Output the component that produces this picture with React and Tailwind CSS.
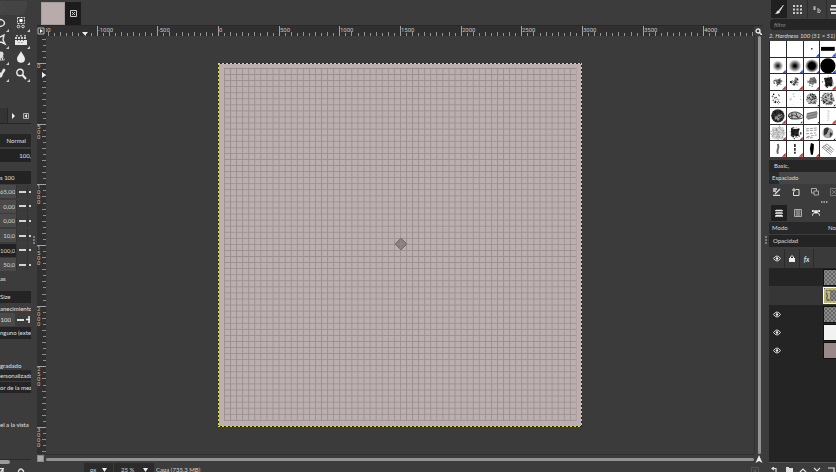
import React from "react";

const PX_PER_UNIT = 364 / 3000;

function rulerTicks(from, to) {
  const out = [];
  for (let u = from; u <= to; u += 50) out.push(u);
  return out;
}

function HorizontalRuler() {
  const zero = 172;
  return (
    <svg className="h-full w-full" fontFamily="Roboto, sans-serif" fontSize="6" fill="#c4c4c4">
      {rulerTicks(-1400, 4900).map((u) => {
        const x = Math.round(zero + u * PX_PER_UNIT);
        const major = u % 500 === 0;
        const h = major ? 10 : u % 100 === 0 ? 4 : 3;
        return <rect key={u} x={x} y={10 - h} width="1" height={h} fill={major ? "#a2a2a2" : "#949494"} />;
      })}
      {[-1000, -500, 0, 500, 1000, 1500, 2000, 2500, 3000, 3500, 4000].map((u) => (
        <text key={u} x={Math.round(zero + u * PX_PER_UNIT) + 1} y="6">{u}</text>
      ))}
      <text x="-2" y="6">00</text>
      <path d="M36 6h6l-3 3.500z" fill="#eee" />
    </svg>
  );
}

function VerticalRuler() {
  const zero = 27;
  return (
    <svg className="h-full w-full" fontFamily="Roboto, sans-serif" fontSize="6" fill="#c4bfa8">
      {rulerTicks(-200, 3300).map((u) => {
        const y = Math.round(zero + u * PX_PER_UNIT);
        const major = u % 500 === 0;
        const w = major ? 9 : u % 100 === 0 ? 4 : 3;
        return <rect key={u} x={9 - w} y={y} width={w} height="1" fill={major ? "#a2a2a2" : "#8c8c8c"} />;
      })}
      {[0, 500, 1000, 1500, 2000, 2500, 3000].map((u) =>
        String(u).split("").map((d, i) => (
          <text key={u + "-" + i} x="0" y={Math.round(zero + u * PX_PER_UNIT) + 5 + i * 5}>{d}</text>
        ))
      )}
      <path d="M5 36v6l4-3z" fill="#eee" />
    </svg>
  );
}

function Artwork() {
  return (
    <svg className="h-[364px] w-[364px] shrink-0" viewBox="0 0 364 364" role="img" aria-label="Canvas">
      <defs>
        <pattern id="cells" x="6" y="5" width="6.067" height="6.067" patternUnits="userSpaceOnUse">
          <path d="M0 .5H6.067M.5 0V6.067" stroke="#9b8f8f" strokeWidth="0.9" />
        </pattern>
      </defs>
      <rect width="364" height="364" fill="#bbafaf" />
      <rect x="6" y="5" width="352.500" height="353" fill="url(#cells)" />
      <rect x=".5" y=".5" width="363" height="363" fill="none" stroke="#25251c" />
      <path d="M0 .5H364M.5 0V364M0 363.500H364M363.500 0V364" fill="none" stroke="#e0da4a" strokeDasharray="2 2" />
      <path d="M183 175l6 6-6 6-6-6z" fill="#877d7d" stroke="#777070" />
      <path d="M183 177v8M179 181h8" stroke="#9b9090" strokeWidth=".7" />
    </svg>
  );
}

const TOOLS = [
  ["Ellipse select", <ellipse key="a" cx="2" cy="6" rx="5.500" ry="3.500" fill="none" stroke="#e5e5e5" strokeWidth="1.500" />],
  ["Foreground select", <g key="a" fill="none" stroke="#ddd"><rect x="2.500" y=".5" width="7" height="6" strokeDasharray="2 1" /><circle cx="6" cy="3.500" r="1.800" fill="#fff" stroke="none" /><circle cx="3.500" cy="9.500" r="1.300" /><circle cx="8" cy="9.500" r="1.300" /></g>],
  ["Cage transform", <path key="a" d="M-2 4l5-1 4-2-1 5 2 4-4-2-6 1" fill="none" stroke="#e5e5e5" strokeWidth="1.400" />],
  ["Gradient", <g key="a" fill="#e8e8e8"><path d="M0 6h12v5H0z" /><path d="M1 1h2v1.500H1zM5 1h2v1.500H5zM9 1h2v1.500H9z" opacity=".7" /><path d="M0 3h2v2H0zM3 3h2v2H3zM6 3h2v2H6zM9 3h2v2H9z" opacity=".85" /><path d="M2 6h1v1H2zM5 6h1v1H5zM8 6h1v1H8zM3.500 8h1v1h-1zM6.500 8h1v1h-1z" fill="#666" /></g>],
  ["Clone", <g key="a" fill="#ddd"><circle cx="4" cy="3" r="2.500" /><path d="M0 5h6l2 4-4 1-2-2-3 2z" /><path d="M4 7l1 3M6 6l1 3" stroke="#555" /></g>],
  ["Blur", <path key="a" d="M6 0C7 3 10 5 10 8a4 3.700 0 0 1-8 0C2 5 5 3 6 0z" fill="#ececec" />],
  ["Colour picker", <path key="a" d="M-2 10l4-3-1-2 2-1 1 1 2-4c2-1 3 1 2 2L6 6l-1 3-3 1z" fill="#e5e5e5" />],
  ["Zoom", <g key="a" fill="none" stroke="#ececec"><circle cx="5" cy="4.500" r="3.200" strokeWidth="1.400" /><path d="M7.500 7L11 11" strokeWidth="2" /></g>],
];

const SPINS = ["65,00", "0,00", "0,00", "10,0", "100,0", "50,0"];

function Spin({ value, dark, index }) {
  return (
    <div className="flex h-[13px] overflow-hidden bg-[#333]">
      <input aria-label={"Value " + index} defaultValue={value} className={"w-4 min-w-0 pr-px text-right text-[6px] leading-[13px] text-[#d8d8d8] " + (dark ? "bg-[#222]" : "bg-[#4a4a4a]")} />
      <button aria-label="Decrease" className="ml-px flex w-2.5 items-center justify-center bg-[#3b3b3b]"><i className="block h-0.5 w-[7px] bg-[#d4d4d4]" /></button>
      <button aria-label="Increase" className="ml-px flex flex-1 items-center justify-center bg-[#3b3b3b]"><i className="block h-0.5 w-0.5 bg-[#d4d4d4]" /></button>
    </div>
  );
}

function ToolDock() {
  return (
    <aside className="flex w-[31px] shrink-0 flex-col overflow-hidden whitespace-nowrap text-[6px] leading-3 text-[#e0e0e0]">
      <svg className="h-[15px] w-full shrink-0"><path d="M0 1h27v5q-1 9-8 9H0z" fill="#444" /><path d="M0 3q4 3 2 8l-2 2" fill="none" stroke="#4d4d4d" /></svg>
      <div className="grid h-[67px] shrink-0 grid-cols-[10px_21px] grid-rows-4">
        {TOOLS.map(([name, art], i) => (
          <button key={name} aria-label={name} className="flex items-center justify-between">
            <svg className={i % 2 ? "ml-[5px] h-3 w-3" : "-ml-1 h-3 w-3"} viewBox={i % 2 ? "0 0 12 12" : "-1 0 12 12"}>{art}</svg>
            <svg className="-ml-1 h-3 w-1 shrink-0 self-end" viewBox="0 0 4 12"><path d="M3 9v3H0z" fill="#ccc" /></svg>
          </button>
        ))}
      </div>
      <div className="mt-[26px] flex h-4 shrink-0 items-center border-b border-[#252525]">
        <span className="h-full w-2 border-r border-[#282828] bg-[#343434]" />
        <button aria-label="Next tab" className="ml-1"><svg className="h-1.5 w-[3px]" viewBox="0 0 3 6"><path d="M0 0l3 3-3 3z" fill="#eee" /></svg></button>
        <button aria-label="Configure tab" className="ml-2"><svg className="h-1.5 w-1.5" viewBox="0 0 6 6"><path d="M.5.5h5v5h-5z" fill="#444" stroke="#aaa" /><path d="M1.500 3l2.500-2v4z" fill="#eee" /></svg></button>
      </div>
      <button className="mt-2.5 h-[13px] shrink-0 bg-[#262626] pr-[5px] text-right">Normal</button>
      <input aria-label="Opacity" defaultValue="100," className="mt-0.5 h-[13px] w-full shrink-0 bg-[#232323] text-right" />
      <input aria-label="Brush" defaultValue="s 100" className="mt-[9px] h-[13px] w-full shrink-0 bg-[#232323]" />
      <div className="mt-px grid h-[88px] shrink-0 grid-rows-6">
        {SPINS.map((v, i) => <Spin key={i} index={i} value={v} dark={i === 4} />)}
      </div>
      <p className="h-[11px] shrink-0 leading-[11px]">as</p>
      <button className="mt-[7px] h-3 shrink-0 bg-[#242424] text-left">Size</button>
      <p className="mt-px h-[9px] shrink-0 leading-[9px]">anecimiento</p>
      <div className="flex h-[13px] shrink-0">
        <input aria-label="Smoothing" defaultValue="100" className="w-[15px] min-w-0 bg-[#4a4a4a] pr-1 text-right" />
        <button aria-label="Decrease" className="flex w-2.5 items-center justify-center"><i className="block h-0.5 w-[7px] bg-[#ddd]" /></button>
        <button aria-label="Increase" className="flex flex-1 items-center"><svg className="h-[7px] w-[5px]"><path d="M1 3.500h6M4 0v7" stroke="#eee" strokeWidth="1.500" /></svg></button>
      </div>
      <button className="mt-px h-3 shrink-0 bg-[#242424] text-left">nguno (exter</button>
      <p className="mt-[22px] h-[9px] shrink-0 leading-[9px]">gradado</p>
      <button className="h-[11px] shrink-0 bg-[#272727] text-left leading-[11px]">ersonalizado</button>
      <button className="mt-px h-[11px] shrink-0 bg-[#242424] text-left leading-[11px]">or de la mezc</button>
      <p className="mt-[26px] shrink-0">el a la vista</p>
      <div className="mt-auto h-[13px] shrink-0 border-t border-[#2b2b2b]">
        <i className="block h-1 w-2.5 rounded-r-full bg-[#9a9a9a]" />
        <svg className="mt-1 h-[5px] w-full"><path d="M0 .5h4M3 1v4M0 5l3-4M18.500 5V3q2-4 5 0v2" fill="none" stroke="#ddd" strokeWidth="1.300" /></svg>
      </div>
    </aside>
  );
}

function Splitter() {
  return (
    <div className="flex h-full w-1.5 shrink-0 items-center justify-center pt-2">
      <svg className="h-2 w-0.5" viewBox="0 0 2 8"><path d="M0 1h2M0 4h2M0 7h2" stroke="#bbb" /></svg>
    </div>
  );
}

function ImageWindow() {
  return (
    <main className="flex min-w-0 flex-1 flex-col">
      <div className="flex h-[26px] shrink-0 items-stretch border-b border-[#292929] pl-1 pt-0.5">
        <button aria-label="Image tab" className="h-[23px] w-6 border border-[#a49a9a] bg-[#b7abab]" />
        <button aria-label="Close image" className="flex h-[23px] w-4 items-center justify-center bg-[#1c1c1c]">
          <svg className="h-[7px] w-[7px]" viewBox="0 0 7 7"><path d="M.5.5h6v6h-6zM2 2l3 3M5 2L2 5" fill="none" stroke="#ccc" /></svg>
        </button>
      </div>
      <div className="flex h-2.5 shrink-0 bg-[#303030]">
        <button aria-label="Image menu" className="flex w-[9px] shrink-0 items-center"><svg className="h-2 w-2" viewBox="0 0 8 8"><path d="M1 1h6v6H1z" fill="#333" stroke="#b5b5b5" /><path d="M3 2l3 2-3 2z" fill="#eee" /></svg></button>
        <div className="min-w-0 flex-1"><HorizontalRuler /></div>
        <button aria-label="Zoom with window" className="flex w-[9px] shrink-0 items-center justify-center bg-[#3b3b3b]"><svg className="h-[7px] w-[7px]" viewBox="0 0 7 7"><circle cx="3" cy="3" r="2" fill="none" stroke="#eee" strokeWidth="1.300" /><path d="M4 4l3 3" stroke="#eee" strokeWidth="1.500" /></svg></button>
      </div>
      <div className="flex min-h-0 flex-1">
        <div className="w-[9px] shrink-0 bg-[#303030]"><VerticalRuler /></div>
        <div className="flex min-w-0 flex-1 items-center justify-center overflow-hidden bg-[#3b3b3b]"><Artwork /></div>
        <div className="flex w-[9px] shrink-0 justify-center border-l border-[#303030]"><i className="block w-[3px] rounded-full bg-[#929292]" /></div>
      </div>
      <div className="flex h-[9px] shrink-0 items-center">
        <button aria-label="Quick mask" className="h-[7px] w-[7px] border border-[#888] bg-[#aaa]" />
        <div className="ml-0.5 flex h-full flex-1 items-center border-t border-[#303030]"><i className="block h-[3px] w-full rounded-full bg-[#929292]" /></div>
        <button aria-label="Navigate" className="flex w-[9px] justify-center"><svg className="h-2 w-2" viewBox="0 0 8 8"><path d="M4 0l3.500 8L4 6 .5 8z" fill="#eee" /></svg></button>
      </div>
      <footer className="flex h-[9px] shrink-0 items-start text-[6px] leading-[10px] text-[#d0d0d0]">
        <button className="ml-[47px] flex h-[9px] w-[29px] items-center justify-between bg-[#2b2b2b] px-1.5 pt-1">px<svg className="h-1 w-[5px]"><path d="M0 0h5L2.500 4z" fill="#eee" /></svg></button>
        <button className="ml-px flex h-[9px] w-10 items-center justify-between bg-[#2b2b2b] pl-[7px] pr-1.5 pt-1">25 %<svg className="h-1 w-[5px]"><path d="M0 0h5L2.500 4z" fill="#eee" /></svg></button>
        <span className="ml-0.5 mt-0.5 h-[7px] flex-1">Capa (735,3 MB)</span>
        <button aria-label="Cancel" className="mr-1 mt-1"><svg className="h-[5px] w-2"><path d="M.5 5V.5h7V5M2 2l3 3M6 2L3 5" fill="none" stroke="#555" /></svg></button>
      </footer>
    </main>
  );
}

function scatter(seed, n, spread, size) {
  let s = seed * 7919 + 13;
  const rnd = () => {
    s = (s * 16807) % 2147483647;
    return s / 2147483647;
  };
  return Array.from({ length: n }, () => {
    const a = rnd() * Math.PI * 2;
    const r = Math.pow(rnd(), 0.6) * spread;
    return { x: 8 + Math.cos(a) * r, y: 8 + Math.sin(a) * r, r: size * (0.5 + rnd()), o: 0.4 + rnd() * 0.6 };
  });
}

function Dots({ seed, n, spread, size, tone = "#111" }) {
  return scatter(seed, n, spread, size).map((d, i) => <circle key={i} cx={d.x} cy={d.y} r={d.r} fill={tone} opacity={d.o} />);
}

const BRUSHES = [
  [null, ""], [null, ""],
  [<circle key="a" cx="8" cy="8" r=".8" />, "b"],
  [<path key="a" d="M1 6h14v4H1z" />, "b"],
  [<circle key="a" cx="8" cy="8" r="5.500" fill="url(#soft1)" />, "b"],
  [<circle key="a" cx="8" cy="8" r="6.500" fill="url(#soft2)" />, "b"],
  [<circle key="a" cx="8" cy="8" r="7" fill="url(#soft3)" />, "b"],
  [<circle key="a" cx="8" cy="8" r="7.800" />, "b"],
  [<g key="a"><path d="M4 6l6-1 3 2-3 3-3 1-1-3z" opacity=".55" /><Dots seed={23} n={30} spread={4.5} size={0.5} /></g>, "r"],
  [<g key="a"><path d="M8 3l3 1-1 5-3 3-2-1 3-4z" opacity=".5" /><Dots seed={44} n={30} spread={4.5} size={0.5} /></g>, "r"],
  [<g key="a"><path d="M6 4l5-1 2 4-4 4-4-1z" opacity=".5" /><Dots seed={5} n={40} spread={4.5} size={0.6} tone="#555" /></g>, "r"],
  [<g key="a"><path d="M4 4l8-1 1 4-1 5-6 1-1-5z" opacity=".8" /><Dots seed={66} n={50} spread={6} size={0.7} /></g>, "r"],
  [<Dots key="a" seed={71} n={26} spread={7} size={0.6} />, ""],
  [<Dots key="a" seed={88} n={18} spread={7} size={0.4} tone="#777" />, ""],
  [<g key="a"><circle cx="8" cy="8" r="5.500" fill="#bbb" /><Dots seed={9} n={90} spread={6} size={0.45} /></g>, "k"],
  [<g key="a"><circle cx="8" cy="8" r="6.500" fill="#ccc" /><Dots seed={101} n={100} spread={7} size={0.5} /></g>, "k"],
  [<g key="a"><circle cx="8" cy="8" r="6.800" fill="#333" /><path d="M5 9q3-4 7-3l1 3-4 4-4-1z" fill="#999" /><Dots seed={31} n={50} spread={6} size={0.6} /></g>, "r"],
  [<g key="a"><ellipse cx="8" cy="8" rx="7" ry="4" fill="#bbb" /><path d="M2 6q6-4 12 0t-1 5H4Q0 9 2 6zM2 9l5-2 5 3 2-2M5 5v6M9 5l2 5" stroke="#222" fill="none" strokeWidth=".8" /></g>, "k"],
  [<g key="a"><path d="M3 5l10-2 1 2-1 5-9 2-2-2z" fill="#999" /><path d="M3 6l10-2M3 9l10-3M4 11l9-2" stroke="#555" strokeWidth=".6" /></g>, "k"],
  [<path key="a" d="M8 2v12M9 3v9" stroke="#bbb" strokeDasharray="1 1.500" />, "r"],
  [<g key="a"><path d="M2 2h12v12H2z" fill="#ddd" /><Dots seed={133} n={140} spread={7.5} size={0.4} tone="#888" /></g>, "r"],
  [<g key="a"><path d="M4 4h8v7H4z" opacity=".8" /><Dots seed={14} n={45} spread={6} size={0.7} /></g>, "r"],
  [<path key="a" d="M2 4l11-1M2 6l12-1M2 9l10-1M3 12l10-2M2 13h8" stroke="#999" strokeDasharray="3 1" />, "k"],
  [<g key="a"><circle cx="8" cy="8" r="5.500" fill="#aaa" /><path d="M4 4q4-3 5 0l-2 5-3 2zM10 7l3 2-3 4z" fill="#333" /></g>, "k"],
  [<path key="a" d="M8 3q1 3 0 5t0 5" stroke="#666" strokeWidth="2" fill="none" />, "r"],
  [<path key="a" d="M8 3v10" stroke="#333" strokeWidth="1.800" strokeDasharray="3 1" fill="none" />, "r"],
  [<path key="a" d="M7 2l3 1v4l-1 7H7L6 8z" />, "r"],
  [<path key="a" d="M2 6l9 8M3 5l9 7M5 4l8 7M7 3l7 6M2 7l5-4M6 10l5-4" stroke="#777" strokeWidth=".8" />, ""],
];

const CORNER = { b: "#3950c8", r: "#c7323a", k: "#222" };

function BrushGrid() {
  return (
    <div className="grid h-[116px] shrink-0 grid-cols-4 grid-rows-7 gap-px overflow-hidden bg-[#2b2b2b] pl-px">
      {BRUSHES.map(([art, mark], i) => (
        <button key={i} aria-label={"Brush " + (i + 1)} className="min-h-0 min-w-0 bg-white">
          <svg className="h-full w-full" viewBox="0 0 16 16">
            {i === 4 && <radialGradient id="soft1"><stop offset="0" /><stop offset="1" stopOpacity="0" /></radialGradient>}
            {i === 5 && <radialGradient id="soft2"><stop offset=".15" /><stop offset="1" stopOpacity="0" /></radialGradient>}
            {i === 6 && <radialGradient id="soft3"><stop offset=".5" /><stop offset="1" stopOpacity="0" /></radialGradient>}
            {art}
            {mark && <path d={mark === "k" ? "M15.500 13.500v2h-2z" : "M16 12v4h-4z"} fill={CORNER[mark]} />}
          </svg>
        </button>
      ))}
    </div>
  );
}

function Eye() {
  return <svg className="h-[7px] w-2" viewBox="0 0 8 7"><path d="M.5 3.500q3.500-5 7 0-3.500 5-7 0z" fill="none" stroke="#ddd" /><circle cx="4" cy="3.500" r="1.300" fill="#eee" /></svg>;
}

const LAYERS = [
  { name: "Layer 1", eye: false, fill: "url(#checker)" },
  { name: "Layer 2", eye: false, fill: "url(#checker)", active: true },
  { name: "Layer 3", eye: true, fill: "url(#checker)" },
  { name: "Layer 4", eye: true, fill: "#f2f2f2" },
  { name: "Layer 5", eye: true, fill: "#9b8989" },
];

function RightDock() {
  return (
    <aside className="flex w-[67px] shrink-0 flex-col overflow-hidden whitespace-nowrap text-[6px] leading-3 text-[#dcdcdc]">
      <div className="flex h-[18px] shrink-0 pl-0.5">
        <button aria-label="Brushes" className="flex w-4 shrink-0 items-center justify-center bg-[#202020]"><svg className="h-[9px] w-[9px]" viewBox="0 0 9 9"><path d="M8.500 0L4 5l1 1zM3.500 5.500L5 7Q3 9 .5 8.500 2 8 2 6.500z" fill="#eee" stroke="#eee" strokeWidth=".5" /></svg></button>
        <button aria-label="Patterns" className="flex w-[21px] shrink-0 items-center justify-center border-r border-[#2d2d2d]"><svg className="h-[9px] w-[9px]" viewBox="0 0 9 9"><path d="M0 1h9M0 4.500h9M0 8h9" stroke="#ccc" strokeWidth="2" strokeDasharray="2 1.500" /></svg></button>
        <button aria-label="Fonts" className="flex w-[19px] shrink-0 items-center justify-center border-r border-[#2d2d2d]"><svg className="h-[7px] w-2" viewBox="0 0 8 7"><path d="M0 1h3M0 3h3M1.500 1v3M5 2v5M5 4.500q3-2 2 1T5 6.500" fill="none" stroke="#bbb" /></svg></button>
        <button aria-label="History" className="flex flex-1 items-center pl-[3px]"><svg className="h-[9px] w-[9px]"><path d="M1 1h8M0 4.500h9M1 8h8" stroke="#ddd" strokeWidth="2" /></svg></button>
      </div>
      <input aria-label="Filter" placeholder="filtro" className="ml-px mt-px h-[11px] w-full shrink-0 rounded-l-sm bg-[#252525] pl-1 italic placeholder:text-[#888]" />
      <p className="h-[11px] shrink-0 italic leading-[11px]">2. Hardness 100 (51 × 51)</p>
      <BrushGrid />
      <div className="mt-[3px] h-3 shrink-0 bg-[#262626] pl-[5px]">Basic,</div>
      <div className="h-3 shrink-0 bg-linear-to-r from-[#2a2a2a] from-15% to-[#454545] to-15% pl-[3px]">Espaciado</div>
      <div className="mt-0.5 flex h-3 shrink-0 items-center gap-[11px] pl-1">
        <button aria-label="Edit brush"><svg className="h-2 w-2" viewBox="0 0 8 8"><path d="M0 1h4M0 3h3M0 7.500h7M2 6l5-5" stroke="#ddd" strokeWidth="1.300" /></svg></button>
        <button aria-label="New brush"><svg className="h-2 w-2" viewBox="0 0 8 8"><path d="M4 1.500h3v6H1.500V4M2 0v4M0 2h4" fill="none" stroke="#ddd" /></svg></button>
        <button aria-label="Duplicate brush"><svg className="h-2 w-2" viewBox="0 0 8 8"><path d="M3 5H.5V.5h5V3M3 3h4.500v4H3z" fill="none" stroke="#aaa" /></svg></button>
        <button aria-label="Delete brush"><svg className="h-2 w-2" viewBox="0 0 8 8"><path d="M.5.5h7v7h-7zM2 2l4 4M6 2L2 6" fill="none" stroke="#777" /></svg></button>
      </div>
      <svg className="mt-[3px] h-0.5 w-full shrink-0"><path d="M52 1h7" stroke="#bbb" strokeWidth="1.500" strokeDasharray="1.500 1" /></svg>
      <div className="mt-0.5 flex h-4 shrink-0 pl-0.5">
        <button aria-label="Layers" className="flex w-4 items-center justify-center bg-[#202020]"><svg className="h-2 w-2" viewBox="0 0 8 8"><path d="M1 1h6l1 1H0zM1 3.500h6l1 1H0zM1 6h6l1 1.500H0z" fill="#eee" stroke="#eee" strokeWidth=".5" /></svg></button>
        <button aria-label="Channels" className="flex w-[22px] items-center justify-center"><svg className="h-2 w-2" viewBox="0 0 8 8"><path d="M.5.5h7v7h-7zM3 1v6M5 1v6" fill="#555" stroke="#aaa" /></svg></button>
        <button aria-label="Paths" className="flex w-3.5 items-center justify-center"><svg className="h-2 w-2" viewBox="0 0 8 8"><path d="M0 2h8M0 7q1-4 4-4t4 4" fill="none" stroke="#ddd" /><path d="M2.500 1.500h3v3h-3zM0 1h1.500v2H0zM6.500 1H8v2H6.500z" fill="#eee" /></svg></button>
      </div>
      <div className="mt-px flex h-3 shrink-0 items-center justify-between bg-[#282828] pl-[3px]"><span>Modo</span><span>No</span></div>
      <div className="mt-px h-3 shrink-0 bg-[#242424] pl-1">Opacidad</div>
      <div className="mt-0.5 flex h-[19px] shrink-0 items-center bg-[#3a3a3a]">
        <span className="flex w-[15px] justify-center"><Eye /></span>
        <span className="flex h-full w-[15px] items-center justify-center border-l border-[#2b2b2b]"><svg className="h-[7px] w-1.5" viewBox="0 0 6 7"><path d="M1.500 3V2q1.500-3 3 0v1" fill="none" stroke="#eee" /><path d="M0 3h6v4H0z" fill="#eee" /></svg></span>
        <span className="flex h-full w-[15px] items-center justify-center border-x border-[#2b2b2b] text-[7px] font-bold italic">fx</span>
      </div>
      <ul className="flex flex-1 flex-col bg-[#242424]">
        {LAYERS.map((l) => (
          <li key={l.name} className={"flex items-center justify-between " + (l.active ? "h-[19px] bg-[#363636]" : "h-[18px]")}>
            <button aria-label={"Visibility of " + l.name} className="flex h-full w-[15px] items-center justify-center">{l.eye && <Eye />}</button>
            <svg className="h-[17px] w-[13px]" viewBox="0 0 13 17">
              <defs><pattern id="checker" width="4" height="4" patternUnits="userSpaceOnUse"><path d="M0 0h4v4H0z" fill="#8c8c8c" /><path d="M0 0h2v2H0zM2 2h2v2H2z" fill="#646464" /></pattern></defs>
              <rect x=".5" y=".5" width="20" height="16" fill={l.fill} stroke={l.active ? "#fff" : "#111"} />
              {l.active && <path d="M2 2h20M2 2v13h20M4 5h2v7" fill="none" stroke="#d8cd5e" strokeWidth="1.500" />}
            </svg>
          </li>
        ))}
      </ul>
      <div className="h-2.5 shrink-0 border-t border-[#555]">
        <svg className="mt-1 h-[5px] w-full"><path d="M3 1.500h4v4M5 0L3 1.500 5 3M31 5l3-3 3 3M45 1l3 3 3-3M59 1h6v5" fill="none" stroke="#ddd" strokeWidth="1.200" /><path d="M17 0h3v1h4v5h-7z" fill="#ddd" /></svg>
      </div>
    </aside>
  );
}

export default function App() {
  return (
    <div className="flex h-screen w-full overflow-hidden bg-[#3c3c3c] font-[Lato,sans-serif]">
      <ToolDock />
      <Splitter />
      <ImageWindow />
      <Splitter />
      <RightDock />
    </div>
  );
}
